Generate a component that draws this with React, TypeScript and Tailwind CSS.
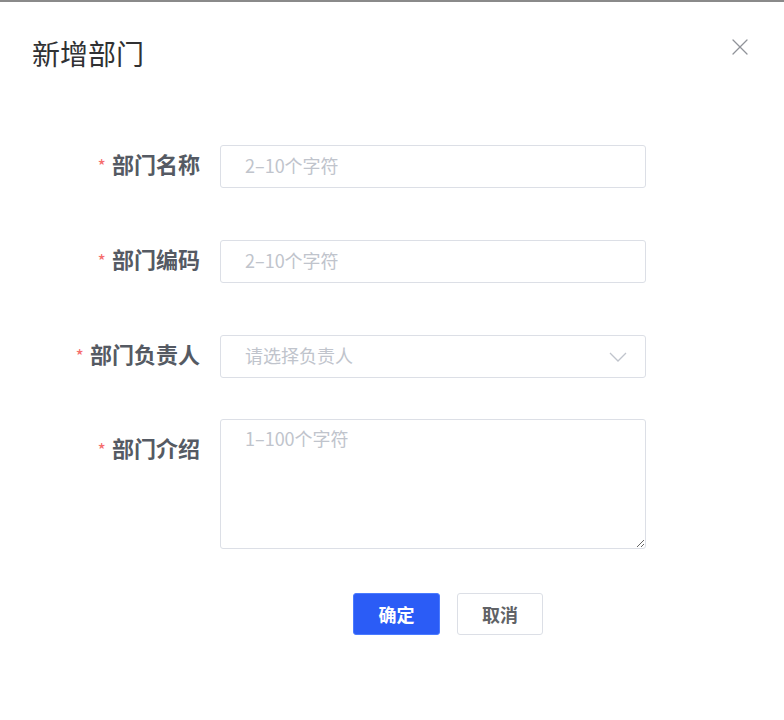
import { X } from 'lucide-react';

const font = { fontFamily: '"Noto Sans CJK SC", "Noto Sans", sans-serif' };

const inputCls =
  'h-[43px] w-[426px] rounded-[3px] border border-[#dcdfe6] px-6 pb-[3px] text-[18px] text-[#606266] outline-none placeholder:text-[#c0c4cc]';

function Label({ text, className = '' }: { text: string; className?: string }) {
  return (
    <div className={`h-[43px] w-[200px] shrink-0 text-right text-[22px] font-bold leading-[37px] text-[#555a63] ${className}`}>
      <span className="mr-[6px] text-[18px] font-normal text-[#f56c6c]">*</span>
      {text}
    </div>
  );
}

export default function App() {
  return (
    <div style={font} className="h-[720px] w-[784px] border-t-2 border-[#8a8a8a] bg-white">
      <div className="flex items-center justify-between pl-8 pr-[30px] pt-[31px]">
        <h1 className="text-[28px] font-normal leading-[38px] text-[#303133]">新增部门</h1>
        <X className="mb-[12px] h-[28px] w-[28px] text-[#909399]" strokeWidth={1.1} />
      </div>

      <form className="mt-[72px] flex flex-col">
        <div className="flex items-start gap-5">
          <Label text="部门名称" />
          <input placeholder="2–10个字符" className={inputCls} />
        </div>

        <div className="mt-[52px] flex items-start gap-5">
          <Label text="部门编码" />
          <input placeholder="2–10个字符" className={inputCls} />
        </div>

        <div className="mt-[52px] flex items-start gap-5">
          <Label text="部门负责人" />
          <div className="flex h-[43px] w-[426px] items-center justify-between rounded-[3px] border border-[#dcdfe6] pl-6 pr-[18px]">
            <span className="pb-[3px] text-[18px] text-[#c0c4cc]">请选择负责人</span>
            <svg width="18" height="10" viewBox="0 0 18 10" fill="none" stroke="#c0c4cc" strokeWidth="1.3">
              <polyline points="1,1 9,9 17,1" />
            </svg>
          </div>
        </div>

        <div className="mt-[41px] flex items-start gap-5">
          <Label text="部门介绍" className="pt-[10px]" />
          <textarea
            placeholder="1–100个字符"
            className="h-[130px] w-[426px] rounded-[3px] border border-[#dcdfe6] px-6 py-[5px] text-[18px] leading-[26px] text-[#606266] outline-none placeholder:text-[#c0c4cc]"
          />
        </div>
      </form>

      <div className="ml-[353px] mt-[44px] flex gap-[17px]">
        <button className="h-[42px] w-[87px] rounded-[3px] border border-[#4a7bff] bg-[#2b5cf6] text-[18px] font-bold text-white">
          确定
        </button>
        <button className="h-[42px] w-[86px] rounded-[3px] border border-[#dcdfe6] bg-white text-[18px] font-bold text-[#606266]">
          取消
        </button>
      </div>
    </div>
  );
}
